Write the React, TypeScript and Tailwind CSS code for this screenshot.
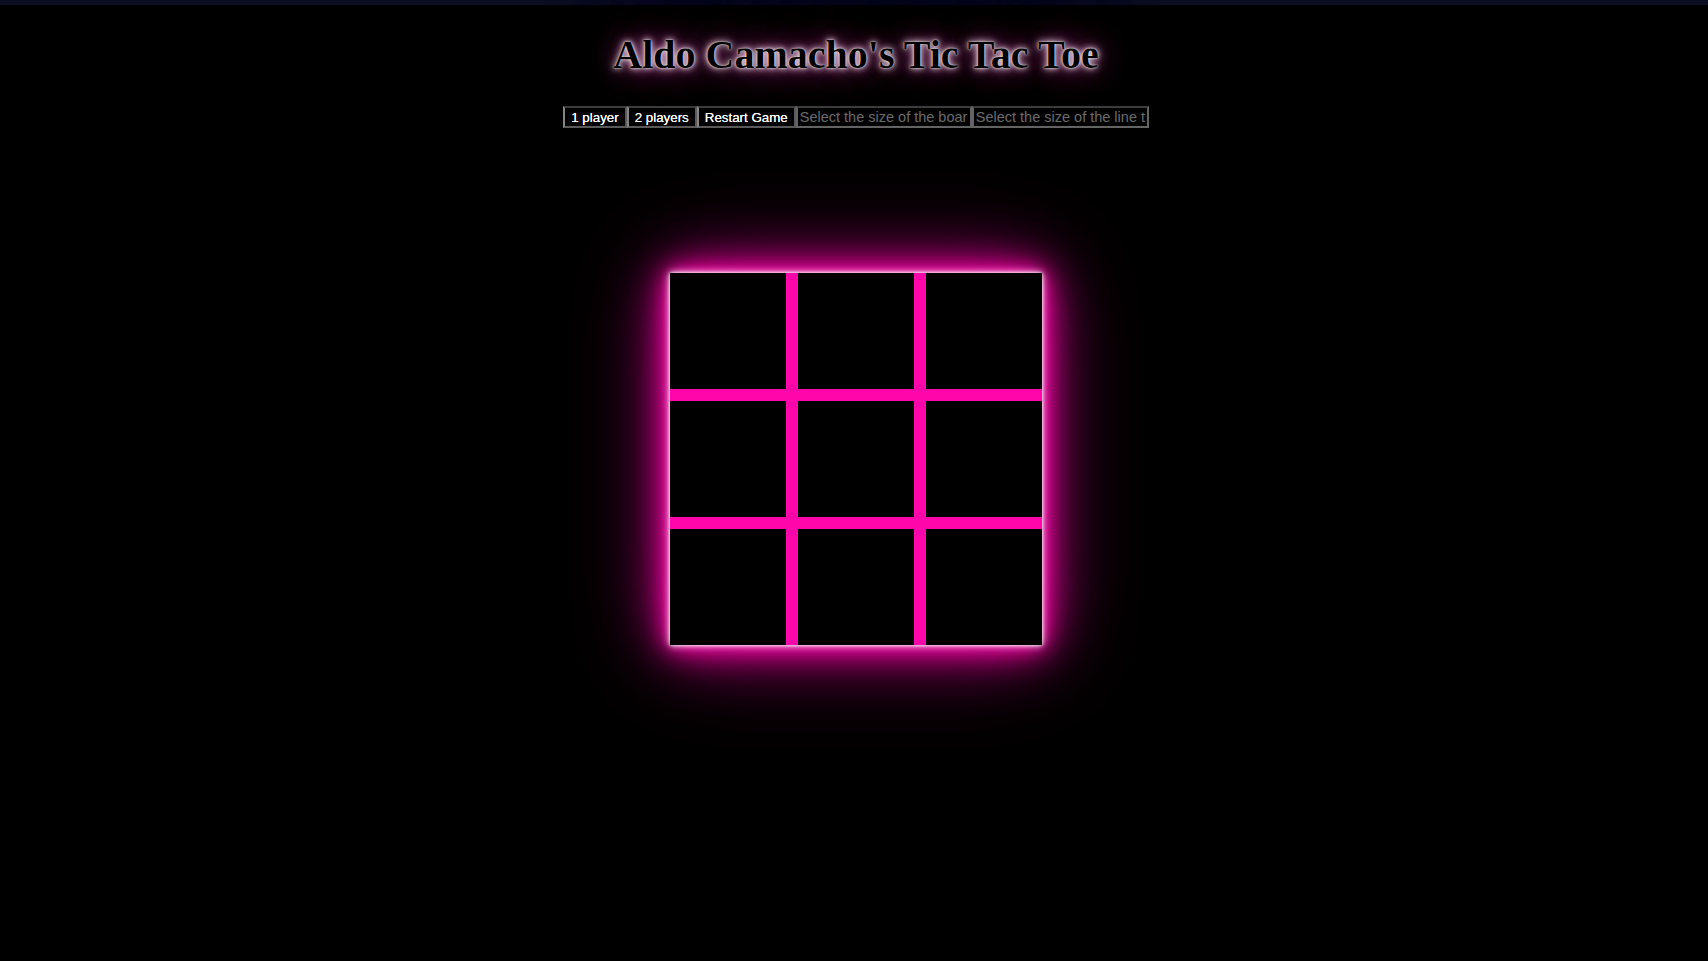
import { useState } from "react";

function App() {
  const [cells, setCells] = useState<string[]>(Array(9).fill(""));

  const play = (i: number) => {
    if (cells[i]) return;
    const next = [...cells];
    next[i] = cells.filter((c) => c).length % 2 === 0 ? "X" : "O";
    setCells(next);
  };

  return (
    <div className="min-h-[961px] w-full bg-black pl-[4px] font-['Liberation_Sans',Arial,sans-serif]">
      <div className="-ml-[4px] h-[5px] bg-[#0b0e22]" />
      <h1
        className="mt-[26px] text-center font-['Liberation_Serif','Times_New_Roman',serif] text-[40px] font-bold leading-[normal] text-black"
        style={{
          textShadow:
            "0 0 2px #fff, 0 0 6px #fff, 0 0 12px #d070b0, 0 0 30px #a0307f, 0 0 60px #701858, 0 0 90px #501040",
        }}
      >
        Aldo Camacho's Tic Tac Toe
      </h1>

      <div className="mt-[28px] flex justify-center">
        <button className="h-[22px] border-2 border-[#5a5a5a] border-l-[#858585] border-t-[#3c3c3c] bg-black px-[6px] text-[13.33px] text-white [text-shadow:0_0_0.4px_#fff]">
          1 player
        </button>
        <button className="h-[22px] border-2 border-[#5a5a5a] border-l-[#858585] border-t-[#3c3c3c] bg-black px-[6px] text-[13.33px] text-white [text-shadow:0_0_0.4px_#fff]">
          2 players
        </button>
        <button
          className="h-[22px] border-2 border-[#5a5a5a] border-l-[#858585] border-t-[#3c3c3c] bg-black px-[6px] text-[13.33px] text-white [text-shadow:0_0_0.4px_#fff]"
          onClick={() => setCells(Array(9).fill(""))}
        >
          Restart Game
        </button>
        <input
          className="h-[22px] w-[176px] border-2 border-[#646464] border-t-[#3c3c3c] bg-black px-[2px] text-[14.5px] text-white outline-none placeholder:text-[#6c6c6c]"
          placeholder="Select the size of the board"
        />
        <input
          className="h-[22px] w-[177px] border-2 border-[#646464] border-t-[#3c3c3c] bg-black px-[2px] text-[14.5px] text-white outline-none placeholder:text-[#6c6c6c]"
          placeholder="Select the size of the line to win"
        />
      </div>

      <div className="mt-[145px] flex justify-center">
        <div
          className="grid h-[372px] w-[372px] grid-cols-3 gap-[12px] bg-[#ff06aa]"
          style={{
            boxShadow:
              "0 0 3px #fff, 0 0 8px #fff, 0 0 18px #ff06aa, 0 0 32px #ff06aa, 0 0 55px #c0047f, 0 0 90px #80035a",
          }}
        >
          {cells.map((c, i) => (
            <div
              key={i}
              className="flex cursor-pointer items-center justify-center bg-black text-[72px] font-bold text-[#ff06aa]"
              onClick={() => play(i)}
            >
              {c}
            </div>
          ))}
        </div>
      </div>
    </div>
  );
}

export default App;
